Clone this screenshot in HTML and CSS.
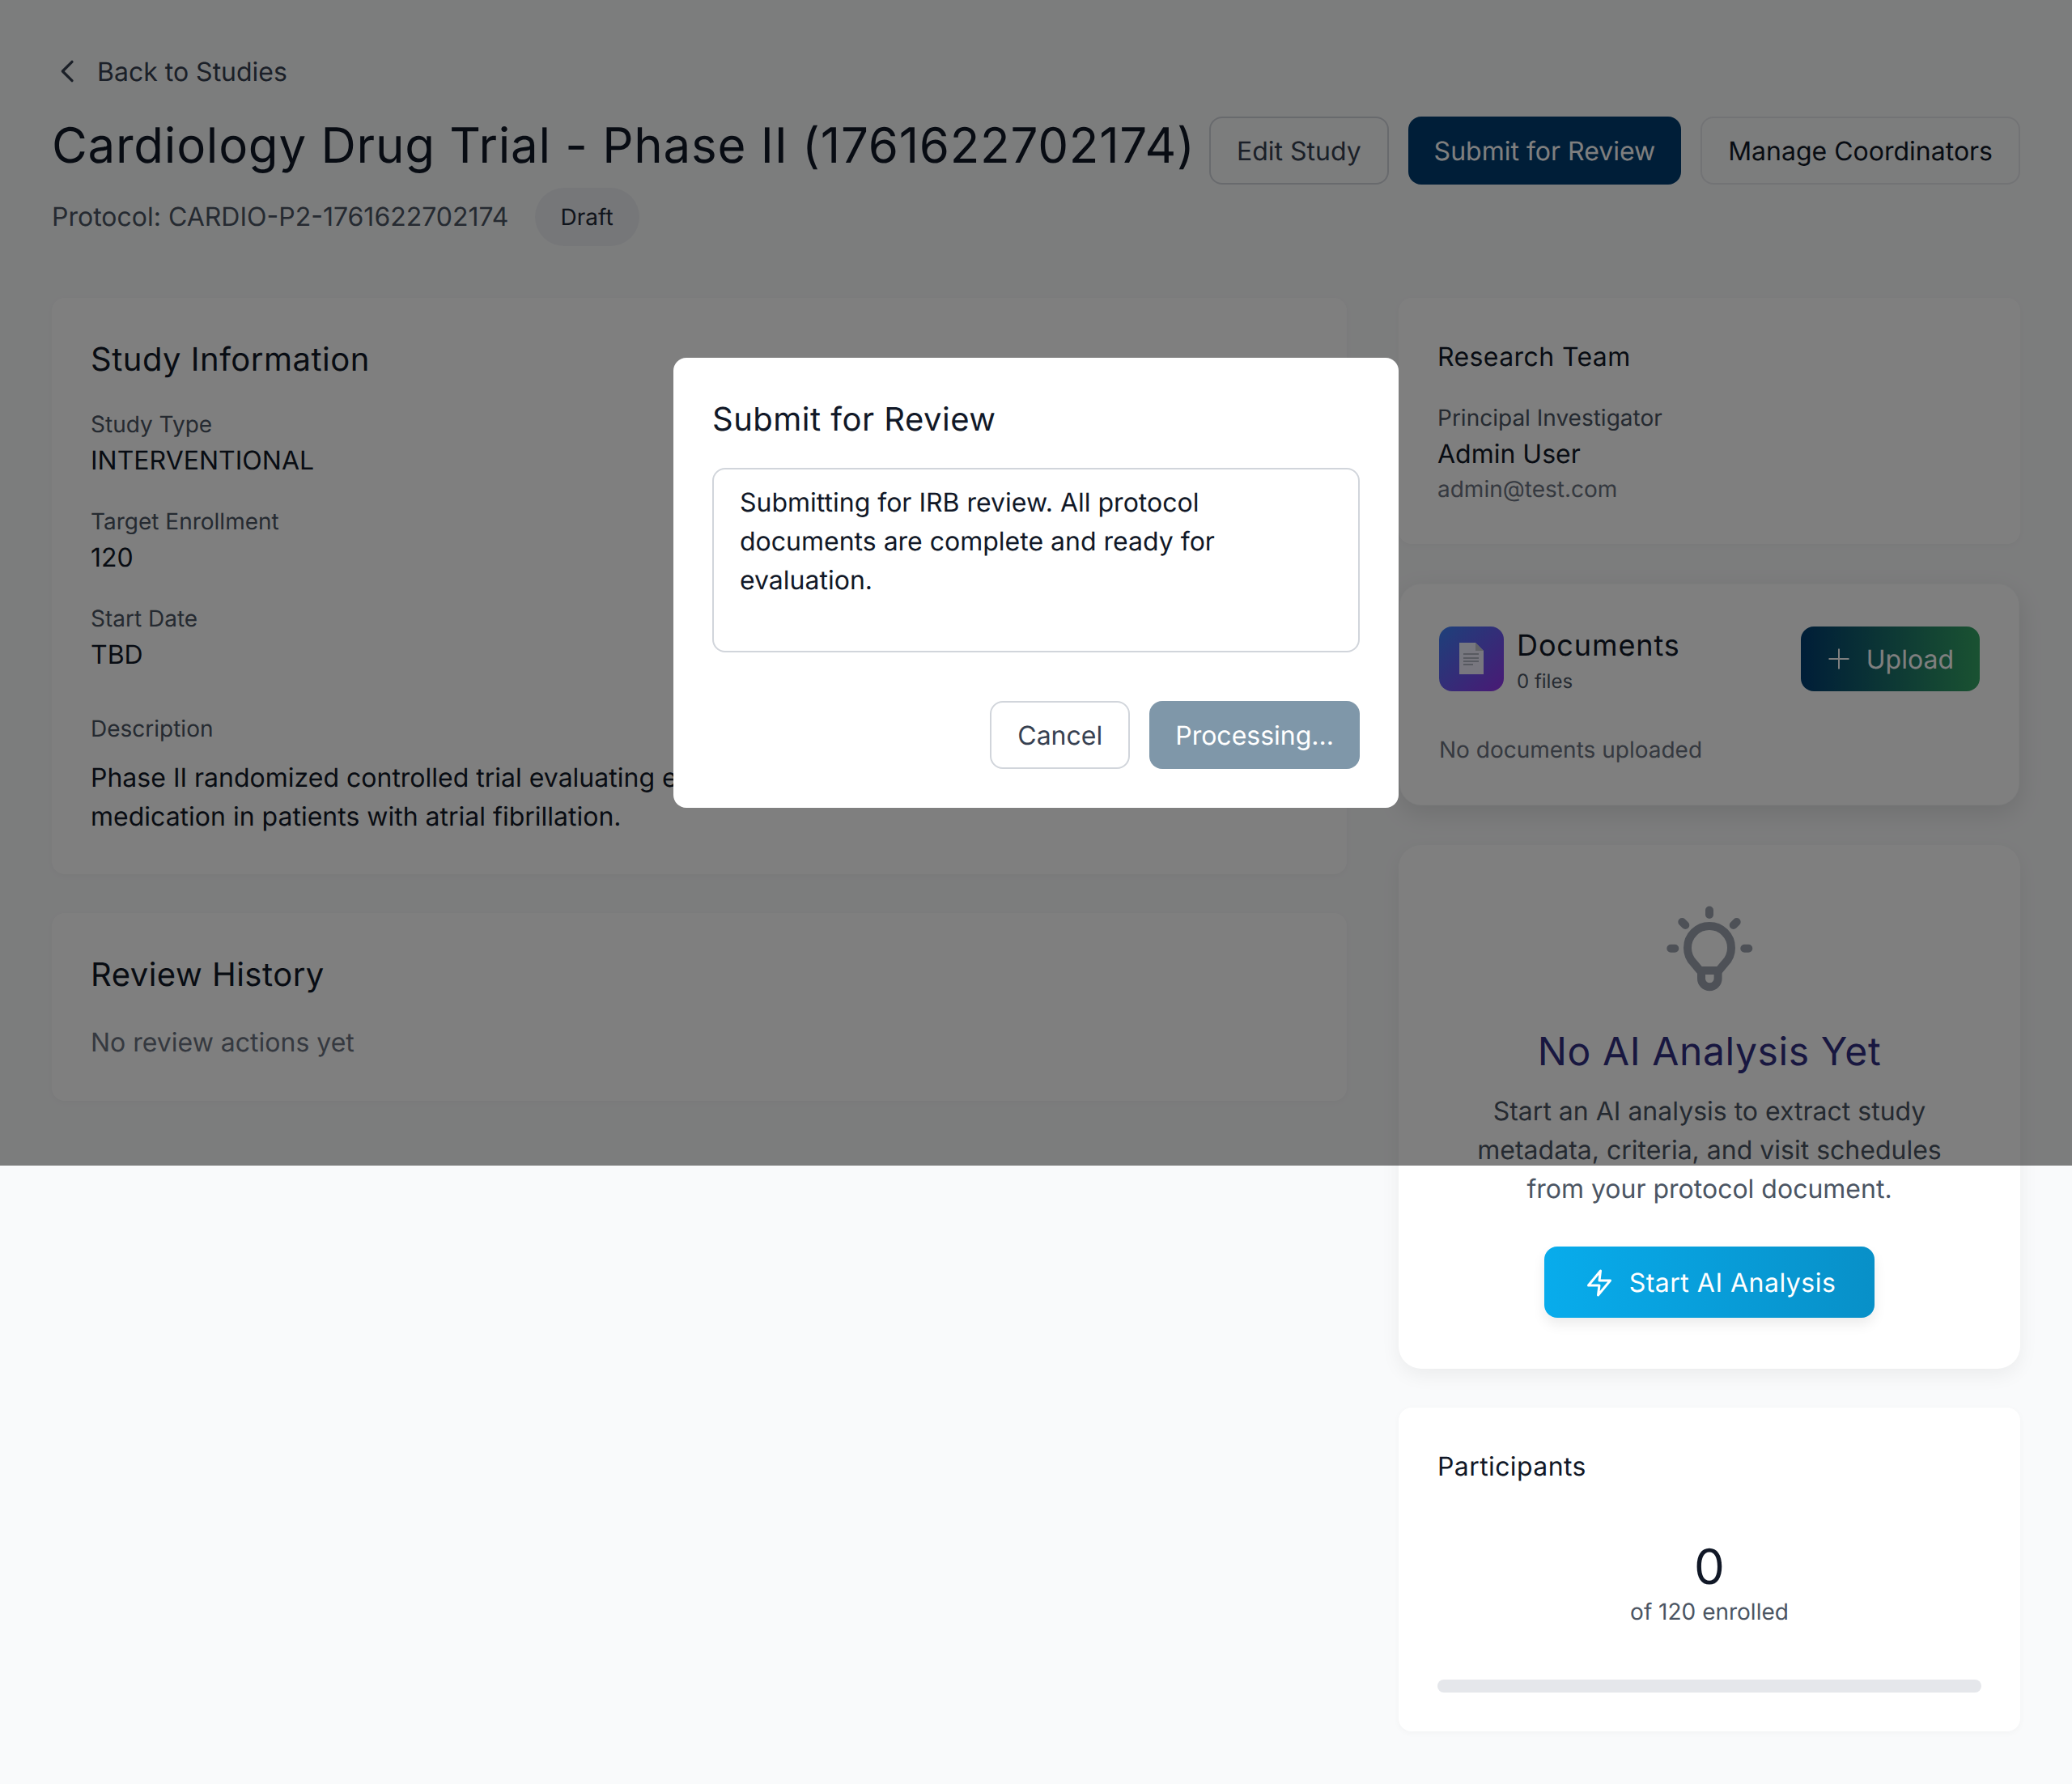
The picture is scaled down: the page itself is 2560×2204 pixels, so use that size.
FILE: index.html
```html
<!doctype html>
<html>
<head>
<meta charset="utf-8">
<title>Study Detail</title>
<link rel="stylesheet" href="styles.css">
</head>
<body>
	<div class="page">
		<a class="back-link">
			<svg class="back-icon" viewBox="0 0 24 24"><path d="M15 5l-7 7 7 7"/></svg>
			<span class="nudge">Back to Studies</span>
		</a>

		<div class="study-head">
			<div class="study-title">
				<h1>Cardiology Drug Trial - Phase II (1761622702174)</h1>
				<div class="study-meta">
					<span class="protocol">Protocol: CARDIO-P2-1761622702174</span>
					<span class="pill">Draft</span>
				</div>
			</div>
			<div class="head-actions">
				<button class="btn btn-outline">Edit Study</button>
				<button class="btn btn-navy">Submit for Review</button>
				<button class="btn btn-outline btn-dark">Manage Coordinators</button>
			</div>
		</div>

		<div class="columns">
			<div class="col-main">
				<section class="card">
					<h2>Study Information</h2>
					<div class="field">
						<div class="label">Study Type</div>
						<div class="value">INTERVENTIONAL</div>
					</div>
					<div class="field">
						<div class="label">Target Enrollment</div>
						<div class="value">120</div>
					</div>
					<div class="field">
						<div class="label">Start Date</div>
						<div class="value">TBD</div>
					</div>
					<div class="description">
						<div class="label">Description</div>
						<p>Phase II randomized controlled trial evaluating efficacy and safety of a novel antiarrhythmic medication in patients with atrial fibrillation.</p>
					</div>
				</section>

				<section class="card">
					<h2>Review History</h2>
					<p class="empty">No review actions yet</p>
				</section>
			</div>

			<div class="col-side">
				<section class="card team">
					<h3>Research Team</h3>
					<div class="label">Principal Investigator</div>
					<div class="person">Admin User</div>
					<div class="label">admin@test.com</div>
				</section>

				<section class="card docs">
					<div class="docs-head">
						<div class="docs-title">
							<div class="docs-icon">
								<svg viewBox="0 0 30 40" width="30" height="40">
									<path class="sheet" d="M0 0H20L30 10V39H0Z"/>
									<path class="fold" d="M20 0L30 10H20Z"/>
									<path class="lines" d="M5 14H24M5 19H24M5 23H24M5 27H17"/>
								</svg>
							</div>
							<div>
								<div class="docs-name">Documents</div>
								<div class="docs-count">0 files</div>
							</div>
						</div>
						<button class="btn-upload">
							<svg class="plus-icon" viewBox="0 0 28 28"><path d="M14 1.5V26.5M1.5 14H26.5"/></svg>
							<span class="nudge">Upload</span>
						</button>
					</div>
					<p class="docs-empty">No documents uploaded</p>
				</section>

				<section class="card ai">
					<svg class="bulb" viewBox="1.7 0 140 130">
						<path d="M71.7 19.5V25M38 34L42 38M105.4 34L101.4 38M24 66.7H29M115 66.7H120"/>
						<path d="M60 94L52.5 85A27 27 0 1 1 90.9 85L83.4 94Z"/>
						<path d="M61.7 94V104A10.3 10.3 0 0 0 82.3 104V94"/>
					</svg>
					<h2 class="ai-title">No AI Analysis Yet</h2>
					<p class="ai-text">Start an AI analysis to extract study metadata, criteria, and visit schedules from your protocol document.</p>
					<button class="btn-start">
						<svg class="zap" viewBox="0 0 24 24"><path d="M13 2L3 14h9l-1 8 10-12h-9l1-8z"/></svg>
						Start AI Analysis
					</button>
				</section>

				<section class="card participants">
					<h3>Participants</h3>
					<div class="count">0</div>
					<div class="count-label">of 120 enrolled</div>
					<div class="progress"></div>
				</section>
			</div>
		</div>
	</div>

	<div class="overlay">
		<div class="modal">
			<h2>Submit for Review</h2>
			<textarea class="notes" rows="4">Submitting for IRB review. All protocol documents are complete and ready for evaluation.</textarea>
			<div class="modal-actions">
				<button class="btn btn-cancel">Cancel</button>
				<button class="btn btn-busy">Processing...</button>
			</div>
		</div>
	</div>
</body>
</html>
```

FILE: styles.css
```css
*{
	box-sizing:border-box;
	margin:0;
	padding:0;
	text-rendering:geometricPrecision;
}

body{
	background:#f9fafb;
	color:#111827;
	font-family:"Inter","Liberation Sans",sans-serif;
	font-size:32px;
	line-height:48px;
}

.page{
	padding:64px;
}

.back-link{
	display:flex;
	align-items:center;
	gap:16px;
	color:#374151;
	margin-bottom:32px;
}

.nudge{
	padding-top:2px;
	line-height:46px;
}

.back-icon{
	width:40px;
	height:40px;
	fill:none;
	stroke:#374151;
	stroke-width:2;
	stroke-linecap:round;
	stroke-linejoin:round;
}

.study-head{
	display:flex;
	align-items:flex-start;
	justify-content:space-between;
	margin-bottom:64px;
}

.study-head h1{
	font-size:60px;
	line-height:72px;
	font-weight:400;
	letter-spacing:.0125em;
	white-space:nowrap;
}

.study-meta{
	display:flex;
	align-items:center;
	gap:32px;
	margin-top:16px;
}

.protocol{
	color:#4b5563;
}

.pill{
	display:block;
	padding:12px 32px;
	border-radius:36px;
	background:#eceef2;
	color:#1f2937;
	font-size:28px;
}

.head-actions{
	display:flex;
	gap:24px;
}

.btn{
	font:inherit;
	height:84px;
	padding:2px 32px 0;
	border-radius:16px;
	border:2px solid transparent;
	white-space:nowrap;
}

.btn-outline{
	background:transparent;
	border-color:#d1d5db;
	color:#374151;
}

.btn-dark{
	color:#111827;
	border-color:#e5e7eb;
}

.btn-navy{
	border:0;
	background:#003c70;
	color:#fff;
}

.columns{
	display:grid;
	grid-template-columns:1600px 768px;
	gap:64px;
	align-items:start;
}

.col-main,
.col-side{
	display:flex;
	flex-direction:column;
	gap:48px;
}

.card{
	background:#fff;
	border-radius:16px;
	padding:48px;
	box-shadow:0 2px 8px rgba(0,0,0,.03);
}

.card h2{
	font-size:40px;
	line-height:56px;
	font-weight:400;
	letter-spacing:.0125em;
	margin-bottom:32px;
}

.card h3{
	font-size:32px;
	line-height:46px;
	padding-top:2px;
	font-weight:400;
	letter-spacing:.0125em;
}

.field{
	margin-bottom:32px;
}

.label{
	font-size:28px;
	line-height:40px;
	color:#4b5563;
}

.value{
	padding-top:2px;
	line-height:46px;
}

.description{
	margin-top:48px;
}

.description p{
	margin-top:17px;
	margin-bottom:-1px;
}

.empty{
	color:#6b7280;
}

.team .label{
	margin-top:32px;
}

.team .person{
	padding-top:2px;
	line-height:46px;
}

.team .person + .label{
	margin-top:0;
	color:#6b7280;
}

.docs,
.ai{
	border-radius:28px;
}

.docs{
	padding:52px 48px 48px;
	border:2px solid transparent;
	background-clip:padding-box;
	box-shadow:0 10px 30px rgba(0,0,0,.1);
}

.docs-head{
	display:flex;
	align-items:center;
	justify-content:space-between;
}

.docs-title{
	display:flex;
	align-items:center;
	gap:16px;
}

.docs-icon{
	width:80px;
	height:80px;
	border-radius:16px;
	background:linear-gradient(135deg,#3b82f6,#9333ea);
	display:flex;
	align-items:center;
	justify-content:center;
}

.sheet{
	fill:#fff;
	fill-opacity:.9;
}

.fold{
	fill:#c4c6cf;
}

.lines{
	fill:none;
	stroke:#9ca3af;
	stroke-width:1.4;
}

.docs-name{
	font-size:36px;
	line-height:46px;
	letter-spacing:.025em;
}

.docs-count{
	font-size:24px;
	line-height:24px;
	margin-top:10px;
	color:#4b5563;
}

.btn-upload{
	display:flex;
	align-items:center;
	gap:20px;
	height:80px;
	padding:0 32px 0 33px;
	border:0;
	border-radius:16px;
	background:linear-gradient(90deg,#003c70,#34a464);
	color:#fff;
	font:inherit;
}

.plus-icon{
	width:28px;
	height:28px;
	fill:none;
	stroke:#fff;
	stroke-width:2;
}

.docs-empty{
	margin-top:52px;
	font-size:28px;
	line-height:40px;
	color:#6b7280;
}

.ai{
	display:flex;
	flex-direction:column;
	align-items:center;
	text-align:center;
	padding:61px 48px 63px;
	box-shadow:0 8px 24px rgba(0,0,0,.06);
}

.bulb{
	width:140px;
	height:130px;
	fill:none;
	stroke:#9ca3af;
	stroke-width:10;
	stroke-linecap:round;
	stroke-linejoin:round;
}

.ai .ai-title{
	margin-top:32px;
	font-size:48px;
	line-height:64px;
	letter-spacing:.0125em;
	color:#312e81;
	margin-bottom:18px;
}

.ai-text{
	color:#4b5563;
	width:620px;
}

.btn-start{
	display:flex;
	align-items:center;
	gap:19px;
	height:88px;
	margin-top:47px;
	padding:2px 48px 0 50px;
	border:0;
	border-radius:16px;
	background:linear-gradient(90deg,#08acec,#0890c8);
	color:#fff;
	font:inherit;
	letter-spacing:.5px;
	box-shadow:0 8px 16px rgba(0,0,0,.08);
}

.zap{
	width:36px;
	height:36px;
	fill:none;
	stroke:#fff;
	stroke-width:2;
	stroke-linejoin:round;
}

.participants{
	text-align:center;
}

.participants h3{
	text-align:left;
}

.count{
	margin-top:65px;
	margin-bottom:-1px;
	font-size:60px;
	line-height:72px;
}

.count-label{
	font-size:28px;
	line-height:40px;
	color:#4b5563;
}

.progress{
	height:16px;
	margin-top:64px;
	border-radius:8px;
	background:#e5e7eb;
}

.overlay{
	position:absolute;
	top:0;
	left:0;
	width:100%;
	height:1440px;
	background:rgba(0,0,0,.5);
	display:flex;
	align-items:center;
	justify-content:center;
}

.modal{
	width:896px;
	padding:48px;
	border-radius:16px;
	background:#fff;
}

.modal h2{
	font-size:40px;
	line-height:56px;
	font-weight:400;
	letter-spacing:.0125em;
	margin-bottom:32px;
	color:#111827;
}

.notes{
	display:block;
	width:100%;
	height:228px;
	padding:17px 32px 15px;
	border:2px solid #d1d5db;
	border-radius:16px;
	color:#111827;
	font:inherit;
	resize:none;
	outline:none;
}

.modal-actions{
	display:flex;
	justify-content:flex-end;
	gap:24px;
	margin-top:60px;
}

.btn-cancel{
	background:#fff;
	border-color:#d1d5db;
	color:#374151;
}

.btn-busy{
	border:0;
	background:#7f97a9;
	color:#fff;
}
```
